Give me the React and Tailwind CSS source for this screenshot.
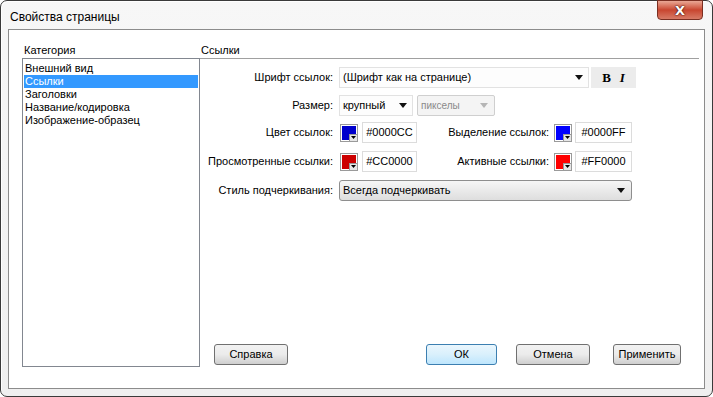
import React from "react"

const font = { fontFamily: '"Liberation Sans", Arial, sans-serif' }

function Arrow({ gray }) {
  return (
    <svg width="8" height="5" viewBox="0 0 8 5" className="shrink-0">
      <path d="M0 0 H8 L4 5 Z" fill={gray ? "#b5b5b5" : "#111"} />
    </svg>
  )
}

function Swatch({ color }) {
  return (
    <div className="relative w-[18px] h-[18px] border border-[#9a9a9a] bg-white p-[1px]">
      <div className="w-full h-full" style={{ background: color }} />
      <div className="absolute right-0 bottom-0 w-[8px] h-[7px] bg-[#e6e6e6] border-l border-t border-[#9a9a9a] flex items-center justify-center">
        <svg width="5" height="3" viewBox="0 0 5 3"><path d="M0 0 H5 L2.5 3 Z" fill="#000" /></svg>
      </div>
    </div>
  )
}

function Hex({ value, w }) {
  return (
    <div className={`${w} h-[21px] border border-[#dcdcdc] bg-white flex items-center justify-center text-[11px] text-black`}>
      {value}
    </div>
  )
}

function Btn({ children, w, primary }) {
  return (
    <div
      className={`${w} h-[21px] rounded-[3px] border flex items-center justify-center text-[11px] text-black ${
        primary
          ? "border-[#3c7fb1] bg-gradient-to-b from-[#eaf6fd] via-[#d9f0fc] to-[#bee6fd]"
          : "border-[#707070] bg-gradient-to-b from-[#f2f2f2] via-[#ebebeb] to-[#cfcfcf]"
      }`}
    >
      {children}
    </div>
  )
}

export default function App() {
  const items = ["Внешний вид", "Ссылки", "Заголовки", "Название/кодировка", "Изображение-образец"]
  return (
    <div className="w-[713px] h-[397px] bg-white" style={font}>
      <div className="relative w-full h-full rounded-[7px] border border-[#3a3a3a] bg-gradient-to-b from-[#f7f7f7] to-[#efefef] flex flex-col shadow-[inset_1px_1px_0_#fff]">
        {/* title bar */}
        <div className="h-[28px] pl-[9px] pt-[4px] flex items-center text-[12px] text-black">Свойства страницы</div>
        <div className="absolute top-[-1px] right-[9px] w-[46px] h-[20px] rounded-b-[4px] border border-[#7a2f22] bg-gradient-to-b from-[#e9a795] via-[#c8452f] to-[#d77a66] flex items-center justify-center">
          <span className="text-white font-bold text-[13px] leading-none [text-shadow:0_0_2px_#3a0a00,0_0_1px_#3a0a00]" style={{ fontFamily: '"DejaVu Sans", sans-serif' }}>X</span>
        </div>

        {/* content panel */}
        <div className="mx-[7px] mb-[7px] flex-1 border border-[#8c8c8c] bg-white flex text-[11px] whitespace-nowrap">
          {/* categories */}
          <div className="pl-[13px] pt-[13px] w-[191px] shrink-0 flex flex-col">
            <div className="leading-[14px] pl-[2px] text-black">Категория</div>
            <div className="mt-[1px] h-[309px] border border-[#828790] pt-[3px] px-[1px] text-black">
              {items.map((it) => (
                <div
                  key={it}
                  className={`h-[13px] leading-[13px] pl-[1px] ${it === "Ссылки" ? "bg-[#3399ff] text-white" : ""}`}
                >
                  {it}
                </div>
              ))}
            </div>
          </div>

          {/* links section */}
          <div className="flex-1 pt-[13px] pr-[5px] flex flex-col text-black">
            <div className="leading-[14px] pl-[1px]">Ссылки</div>
            <div className="mt-[1px] h-[1px] bg-[#a0a0a0]" />

            {/* row 1 */}
            <div className="mt-[8px] flex items-center">
              <div className="w-[133px] text-right">Шрифт ссылок:</div>
              <div className="ml-[6px] w-[250px] h-[21px] border border-[#e2e2e2] bg-[#fdfdfd] flex items-center justify-between pl-[3px] pr-[5px]">
                <span>(Шрифт как на странице)</span>
                <Arrow />
              </div>
              <div className="ml-[2px] w-[45px] h-[21px] bg-[#ececec] flex items-center justify-center gap-[9px] text-[13px] font-bold" style={{ fontFamily: '"Liberation Serif", serif' }}>
                <span>B</span>
                <span className="italic">I</span>
              </div>
            </div>

            {/* row 2 */}
            <div className="mt-[7px] flex items-center">
              <div className="w-[133px] text-right">Размер:</div>
              <div className="ml-[6px] w-[74px] h-[21px] border border-[#e2e2e2] bg-[#fdfdfd] flex items-center justify-between pl-[3px] pr-[5px]">
                <span>крупный</span>
                <Arrow />
              </div>
              <div className="ml-[4px] w-[78px] h-[21px] rounded-[2px] border border-[#cfcfcf] bg-[#f4f4f4] flex items-center justify-between pl-[3px] pr-[6px] text-[10px] text-[#8a8a8a]">
                <span>пикселы</span>
                <Arrow gray />
              </div>
            </div>

            {/* row 3 */}
            <div className="mt-[6px] flex items-center">
              <div className="w-[133px] text-right">Цвет ссылок:</div>
              <div className="ml-[7px]"><Swatch color="#0000cc" /></div>
              <div className="ml-[4px]"><Hex value="#0000CC" w="w-[55px]" /></div>
              <div className="w-[132px] text-right">Выделение ссылок:</div>
              <div className="ml-[5px]"><Swatch color="#0000ff" /></div>
              <div className="ml-[3px]"><Hex value="#0000FF" w="w-[57px]" /></div>
            </div>

            {/* row 4 */}
            <div className="mt-[8px] flex items-center">
              <div className="w-[133px] text-right">Просмотренные ссылки:</div>
              <div className="ml-[7px]"><Swatch color="#cc0000" /></div>
              <div className="ml-[4px]"><Hex value="#CC0000" w="w-[55px]" /></div>
              <div className="w-[132px] text-right">Активные ссылки:</div>
              <div className="ml-[5px]"><Swatch color="#ff0000" /></div>
              <div className="ml-[3px]"><Hex value="#FF0000" w="w-[57px]" /></div>
            </div>

            {/* row 5 */}
            <div className="mt-[8px] flex items-center">
              <div className="w-[133px] text-right">Стиль подчеркивания:</div>
              <div className="ml-[6px] w-[293px] h-[21px] rounded-[3px] border border-[#8e8e8e] bg-gradient-to-b from-[#f6f6f6] to-[#dedede] flex items-center justify-between pl-[3px] pr-[6px]">
                <span>Всегда подчеркивать</span>
                <Arrow />
              </div>
            </div>

            <div className="flex-1" />

            {/* buttons */}
            <div className="mb-[23px] flex items-center pl-[14px] pr-[18px]">
              <Btn w="w-[74px]">Справка</Btn>
              <div className="flex-1" />
              <Btn w="w-[71px]" primary>ОК</Btn>
              <div className="ml-[19px]"><Btn w="w-[74px]">Отмена</Btn></div>
              <div className="ml-[23px]"><Btn w="w-[68px]">Применить</Btn></div>
            </div>
          </div>
        </div>
      </div>
    </div>
  )
}
